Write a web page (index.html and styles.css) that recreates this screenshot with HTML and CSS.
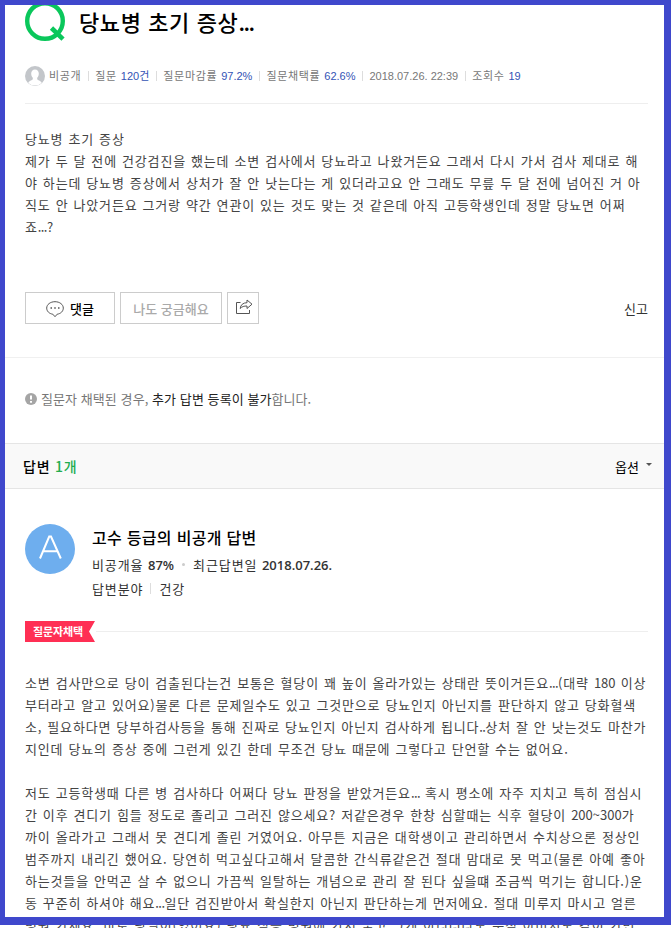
FILE: index.html
```html
<!DOCTYPE html>
<html lang="ko">
<head>
  <meta charset="UTF-8">
  <meta name="viewport" content="width=device-width, initial-scale=1.0">
  <title>당뇨병 초기 증상...</title>
  <link rel="stylesheet" href="styles.css">
</head>
<body>
  <div class="page">
    <div class="question">
      <div class="title-row">
        <svg class="icon-q" width="42" height="42" viewBox="0 0 42 42">
          <circle cx="20" cy="20" r="17.8" fill="none" stroke="#0ac75b" stroke-width="4.4"/>
          <path d="M26.5 27 L38 38.200" stroke="#0ac75b" stroke-width="4.600"/>
        </svg>
        <h1>당뇨병 초기 증상<span class="dots">...</span></h1>
      </div>

      <div class="info">
        <svg class="profile" width="20" height="20" viewBox="0 0 20 20">
          <circle cx="10" cy="10" r="10" fill="#c3c6ca"/>
          <path d="M10 3.6c2.4 0 3.8 1.7 3.8 4 0 1.800-.6 3.300-1.600 4.200v1.500c0 .9 3.800 1.200 4.500 3.600a10 10 0 0 1-13.400 0c.7-2.400 4.500-2.700 4.500-3.600v-1.500c-1-.9-1.600-2.400-1.600-4.200 0-2.300 1.400-4 3.800-4z" fill="#fff"/>
        </svg>
        <span class="item">비공개</span>
        <span class="item">질문 <em>120건</em></span>
        <span class="item">질문마감률 <em>97.2%</em></span>
        <span class="item">질문채택률 <em>62.6%</em></span>
        <span class="item date">2018.07.26. 22:39</span>
        <span class="item">조회수 <em>19</em></span>
      </div>

      <p class="text question-text">당뇨병 초기 증상<br>
제가 두 달 전에 건강검진을 했는데 소변 검사에서 당뇨라고 나왔거든요 그래서 다시 가서 검사 제대로 해<br>
야 하는데 당뇨병 증상에서 상처가 잘 안 낫는다는 게 있더라고요 안 그래도 무릎 두 달 전에 넘어진 거 아<br>
직도 안 나았거든요 그거랑 약간 연관이 있는 것도 맞는 것 같은데 아직 고등학생인데 정말 당뇨면 어쩌<br>
죠<span class="dots">...</span>?</p>

      <div class="buttons">
        <button class="btn btn-comment">
          <svg width="18" height="17" viewBox="0 0 18 17" fill="none" stroke="#555">
            <path d="M6.800 13.200C3.200 12.700.7 10.200.7 7.100.7 3.500 4.300.7 9 .7s8.300 2.800 8.300 6.400c0 3.100-2.500 5.600-6.100 6.100L9 15.700z"/>
            <path d="M4.500 7h1.500M8.250 7h1.500M12 7h1.500" stroke-width="1.400"/>
          </svg>
          댓글
        </button>
        <button class="btn btn-curious">나도 궁금해요</button>
        <button class="btn btn-share">
          <svg width="18" height="16" viewBox="0 0 18 16" fill="none" stroke="#555">
            <path d="M5.500 3.500H1.500v11h13V11"/>
            <path d="M5.200 9.500C5.500 6 8 3.700 12 3.700V1l5 4.200-5 4.300V7C9 7 7 7.500 5.200 9.500z"/>
          </svg>
        </button>
        <a class="report">신고</a>
      </div>
    </div>

    <div class="notice">
      <svg width="12" height="12" viewBox="0 0 12 12">
        <circle cx="6" cy="6" r="6" fill="#a5a5a5"/>
        <path d="M6 2.500v4M6 8v1.700" stroke="#fff" stroke-width="2"/>
      </svg>
      <p>질문자 채택된 경우, <strong>추가 답변 등록이 불가</strong>합니다.</p>
    </div>

    <div class="answer-bar">
      <h2>답변 <em>1개</em></h2>
      <span class="option">옵션 <i class="arrow"></i></span>
    </div>

    <div class="answer">
      <div class="answerer">
        <svg width="50" height="50" viewBox="0 0 50 50">
          <circle cx="25" cy="25" r="25" fill="#6eaeee"/>
          <path d="M15 34.500 L24.200 12.500h1.800L35.800 34.500M18.300 27.300h14" fill="none" stroke="#fff" stroke-width="2"/>
        </svg>
        <div class="answerer-info">
          <h3>고수 등급의 비공개 답변</h3>
          <p>비공개율 <b>87%</b><i class="dot"></i>최근답변일 <b>2018.07.26.</b></p>
          <p>답변분야<i class="bar"></i>건강</p>
        </div>
      </div>

      <div class="adopted"><span>질문자채택</span></div>

      <p class="text answer-text">소변 검사만으로 당이 검출된다는건 보통은 혈당이 꽤 높이 올라가있는 상태란 뜻이거든요<span class="dots">...</span>(대략 <span class="num">180</span> 이상<br>
부터라고 알고 있어요)물론 다른 문제일수도 있고 그것만으로 당뇨인지 아닌지를 판단하지 않고 당화혈색<br>
소, 필요하다면 당부하검사등을 통해 진짜로 당뇨인지 아닌지 검사하게 됩니다<span class="dots">..</span>상처 잘 안 낫는것도 마찬가<br>
지인데 당뇨의 증상 중에 그런게 있긴 한데 무조건 당뇨 때문에 그렇다고 단언할 수는 없어요.<br>
<br>
저도 고등학생때 다른 병 검사하다 어쩌다 당뇨 판정을 받았거든요<span class="dots">...</span> 혹시 평소에 자주 지치고 특히 점심시<br>
간 이후 견디기 힘들 정도로 졸리고 그러진 않으세요? 저같은경우 한창 심할때는 식후 혈당이 <span class="num">200~300</span>가<br>
까이 올라가고 그래서 못 견디게 졸린 거였어요. 아무튼 지금은 대학생이고 관리하면서 수치상으론 정상인<br>
범주까지 내리긴 했어요. 당연히 먹고싶다고해서 달콤한 간식류같은건 절대 맘대로 못 먹고(물론 아예 좋아<br>
하는것들을 안먹곤 살 수 없으니 가끔씩 일탈하는 개념으로 관리 잘 된다 싶을떄 조금씩 먹기는 합니다.)운<br>
동 꾸준히 하셔야 해요<span class="dots">...</span>일단 검진받아서 확실한지 아닌지 판단하는게 먼저에요. 절대 미루지 마시고 얼른<br>
병원 가세요. 바로 당일이(있어요) 당뇨 심증 병원에 가서 좋고 그게 아니더라도 누적 아버지도 같이 가면</p>
    </div>
  </div>
  <div class="frame"></div>
</body>
</html>
```

FILE: styles.css
```css
* {
  box-sizing: border-box;
}
body {
  margin: 0;
  height: 928px;
  overflow: hidden;
  background: #fff;
  color: #333;
  font-family: "Noto Sans CJK KR", sans-serif;
  font-size: 13px;
}
h1, h2, h3, p {
  margin: 0;
}
em, i {
  font-style: normal;
}
.page {
  padding: 0 7px 0 5px;
  height: 928px;
  overflow: hidden;
}
/* blue outline over the whole screen */
.frame {
  position: absolute;
  top: 0;
  left: 0;
  width: 671px;
  height: 925px;
  border: 5px solid #3f48cc;
  border-right-width: 7px;
  border-bottom-width: 8px;
}
.question {
  height: 358px;
  padding: 0 16px 0 20px;
  border-bottom: 1px solid #f0f0f0;
}
.title-row {
  display: flex;
  height: 56px;
}
.icon-q {
  margin-top: 1px;
}
.title-row h1 {
  margin-left: 12px;
  font-size: 22px;
  font-weight: 500;
  line-height: 43px;
  letter-spacing: 0.6px;
  color: #000;
  white-space: nowrap;
}
.title-row .dots {
  letter-spacing: -1.5px;
}
.info {
  display: flex;
  align-items: center;
  height: 48px;
  padding-bottom: 8px;
  border-bottom: 1px solid #eee;
  font-family: "Liberation Sans", "Noto Sans CJK KR", sans-serif;
  font-size: 11px;
  line-height: 20px;
  letter-spacing: 0.65px;
  color: #777;
  white-space: nowrap;
}
.profile {
  margin-right: 4px;
}
.item + .item::before {
  content: "";
  display: inline-block;
  width: 1px;
  height: 10px;
  margin: 0 6px 0 7px;
  vertical-align: -1px;
  background: #ddd;
}
.info em {
  margin-left: 0.3px;
  color: #3353b5;
  letter-spacing: 0;
}
.info .date {
  letter-spacing: 0;
}
.text {
  line-height: 22px;
  letter-spacing: 0.83px;
  word-spacing: 0.6px;
  font-weight: 400;
  color: #444;
  white-space: nowrap;
}
.text .dots {
  letter-spacing: -0.6px;
}
.text .num {
  letter-spacing: 0;
}
.question-text {
  padding-top: 24px;
  height: 188px;
}
.buttons {
  display: flex;
  height: 32px;
}
.btn {
  display: flex;
  align-items: center;
  justify-content: center;
  height: 32px;
  margin-right: 5px;
  padding: 0;
  border: 1px solid #ccc;
  background: #fff;
  font-family: inherit;
  font-size: 13px;
  font-weight: 500;
}
.btn-comment {
  width: 90px;
  gap: 6px;
  color: #000;
}
.btn-comment svg {
  margin-top: 3px;
}
.btn-curious {
  width: 102px;
  color: #aaa;
}
.btn-share {
  width: 32px;
}
.btn-share svg {
  margin: 0 0 2px 2px;
}
.report {
  margin-left: auto;
  line-height: 33px;
}
.notice {
  display: flex;
  align-items: center;
  height: 85px;
  padding: 0 0 4px 20px;
  letter-spacing: 0.07px;
  color: #777;
}
.notice p {
  margin-left: 4px;
}
.notice strong {
  font-weight: 400;
  color: #222;
}
.answer-bar {
  display: flex;
  justify-content: space-between;
  align-items: center;
  height: 46px;
  padding: 0 12px 0 18px;
  border-top: 1px solid #e5e5e5;
  border-bottom: 1px solid #e5e5e5;
  background: #f9f9f9;
  color: #000;
}
.answer-bar h2 {
  font-size: 14px;
  font-weight: 500;
  letter-spacing: 0.8px;
}
.answer-bar em {
  color: #22ad4e;
}
.option {
  display: flex;
  align-items: center;
}
.arrow {
  margin: -4px 0 0 7px;
  border: 3px solid transparent;
  border-top-color: #555;
  border-bottom: 0;
}
.answer {
  padding: 35px 16px 0 20px;
}
.answerer {
  display: flex;
  height: 97px;
}
.answerer-info {
  margin-left: 17px;
}
.answerer-info h3 {
  margin-bottom: 2px;
  font-size: 16px;
  font-weight: 500;
  line-height: 27px;
  letter-spacing: 0.3px;
  color: #000;
}
.answerer-info p {
  line-height: 24px;
  letter-spacing: 0.9px;
}
.answerer-info b {
  font-family: "Open Sans", sans-serif;
  font-weight: 600;
  letter-spacing: 0;
}
.dot {
  display: inline-block;
  width: 3px;
  height: 3px;
  margin: 0 8px 4px;
  border-radius: 50%;
  background: #ccc;
}
.bar {
  display: inline-block;
  width: 1px;
  height: 11px;
  margin: 0 8px 0 7px;
  background: #ddd;
}
/* ribbon label with the line running to the right */
.adopted {
  display: flex;
  align-items: center;
  height: 21px;
}
.adopted span {
  width: 70px;
  height: 21px;
  padding-left: 8px;
  background: #ff2f54;
  clip-path: polygon(0 0, 100% 0, 64px 50%, 100% 100%, 0 100%);
  color: #fff;
  font-size: 11px;
  font-weight: 700;
  line-height: 20px;
  letter-spacing: -0.1px;
}
.adopted::after {
  content: "";
  flex: 1;
  height: 1px;
  margin-left: 1px;
  background: #eee;
}
.answer-text {
  margin-top: 30px;
}
```
